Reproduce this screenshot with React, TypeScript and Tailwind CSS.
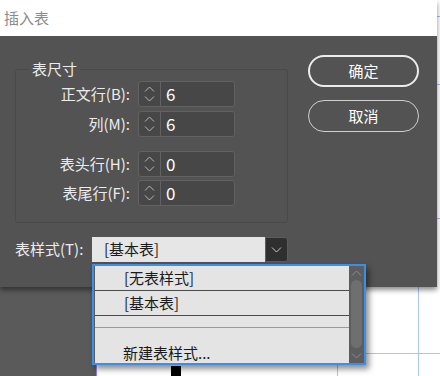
import React from 'react';

const font = "font-['Noto_Sans_CJK_SC','Noto_Sans',sans-serif]";

// 小箭头
function Chevron({ up }: { up?: boolean }) {
  return (
    <svg width="11" height="6" viewBox="0 0 11 6">
      <path
        d={up ? 'M1 5.5 L5.5 1 L10 5.5' : 'M1 0.5 L5.5 5 L10 0.5'}
        fill="none"
        stroke="currentColor"
        strokeWidth="1"
      />
    </svg>
  );
}

function Spinner({ value }: { value: string }) {
  return (
    <div className="flex h-[26px] w-[97px] rounded-[3px] border border-[#626262] bg-[#474747]">
      <div className="flex w-[22px] flex-col items-center justify-center gap-[4px] border-r border-[#626262] text-[#b8b8b8]">
        <Chevron up />
        <Chevron />
      </div>
      <div className="flex items-center pl-[5px] text-[17px] text-white">{value}</div>
    </div>
  );
}

function Row({ label, value, className }: { label: string; value: string; className: string }) {
  return (
    <div className={`flex items-center ${className}`}>
      <div className="w-[114px] text-right text-[15px] text-[#ececec]">{label}</div>
      <div className="ml-[8px]">
        <Spinner value={value} />
      </div>
    </div>
  );
}

export default function App() {
  return (
    <div className={`relative flex h-[376px] w-[440px] flex-col overflow-hidden bg-white ${font}`}>
      {/* 对话框 */}
      <div className="flex h-[287px]">
        <div className="relative z-10 flex w-[437px] flex-col bg-[#535353] shadow-[0_3px_5px_rgba(0,0,0,0.45)]">
          <div className="flex h-[36px] items-center bg-white pl-[4px] text-[15px] text-[#8c8c8c]">插入表</div>
          <div className="flex pl-[15px] pt-[19px]">
            <div className="w-[273px]">
              <fieldset className="mt-[4px] rounded-[3px] border border-[#494949] pb-[16px]">
                <legend className="ml-[13px] px-[3px] text-[15px] leading-[20px] text-[#ececec]">表尺寸</legend>
                <Row label="正文行(B):" value="6" className="mt-[2px]" />
                <Row label="列(M):" value="6" className="mt-[4px]" />
                <Row label="表头行(H):" value="0" className="mt-[14px]" />
                <Row label="表尾行(F):" value="0" className="mt-[3px]" />
              </fieldset>

              {/* 表样式 */}
              <div className="mt-[14px] flex h-[25px] items-center">
                <div className="w-[77px] text-[15px] text-[#ececec]">表样式(T):</div>
                <div className="flex h-full w-[173px] items-center bg-[#e6e6e6] pl-[12px] text-[15px] text-[#1a1a1a]">
                  [基本表]
                </div>
                <div className="flex h-full w-[23px] items-center justify-center rounded-r-[3px] border border-[#5c5c5c] bg-[#2f2f2f] text-[#c8c8c8]">
                  <Chevron />
                </div>
              </div>
            </div>

            {/* 按钮 */}
            <div className="ml-[20px] w-[111px]">
              <button className="flex h-[32px] w-full items-center justify-center rounded-full border-2 border-[#ececec] text-[15px] text-white">
                确定
              </button>
              <button className="mt-[13px] flex h-[32px] w-full items-center justify-center rounded-full border border-[#cfcfcf] text-[15px] text-white">
                取消
              </button>
            </div>
          </div>
        </div>
        <div className="relative flex-1 bg-white">
          <div className="absolute left-0 top-[16px] h-px w-full bg-[#9fc0f0]" />
          <div className="absolute left-0 top-[84px] h-px w-full bg-[#9fc0f0]" />
          <div className="absolute left-0 top-[218px] h-px w-full bg-[#9fc0f0]" />
        </div>
      </div>

      {/* 底部画布 */}
      <div className="flex flex-1">
        <div className="w-[96px] bg-[#5a5a5a]" />
        <div className="w-px bg-[#8f80ee]" />
        <div className="relative flex-1 bg-white">
          <div className="absolute left-[240px] top-0 h-full w-px bg-[#a9c6f3]" />
          <div className="absolute left-[321px] top-0 h-full w-px bg-[#a9c6f3]" />
          <div className="absolute left-0 top-[66px] h-px w-full bg-[#a9c6f3]" />
          <div className="absolute left-[74px] top-[79px] h-[10px] w-[10px] bg-black" />
        </div>
      </div>

      {/* 下拉列表 */}
      <div className="absolute left-[92px] top-[264px] z-20 flex h-[101px] w-[274px] border-2 border-[#3d8ee6] bg-[#5d5d5d] shadow-[3px_4px_6px_rgba(0,0,0,0.45)]">
        <div className="flex flex-1 flex-col border-l border-[#5a5a5a] bg-[#e4e4e4] text-[15px] text-[#1a1a1a]">
          <div className="flex h-[25px] shrink-0 items-center border-b border-[#4a4a4a] pl-[29px]">[无表样式]</div>
          <div className="flex h-[25px] shrink-0 items-center border-b border-[#4a4a4a] pl-[29px]">[基本表]</div>
          <div className="h-[12px] shrink-0 border-b border-[#9a9a9a]" />
          <div className="flex flex-1 items-end pl-[28px] leading-[20px]">新建表样式...</div>
        </div>
        <div className="flex w-[15px] flex-col items-center bg-[#5d5d5d] text-[#8c8c8c]">
          <div className="flex h-[14px] items-center">
            <Chevron up />
          </div>
          <div className="h-[68px] w-[11px] rounded-full bg-[#6f6f6f]" />
          <div className="flex flex-1 items-center">
            <Chevron />
          </div>
        </div>
      </div>
    </div>
  );
}
